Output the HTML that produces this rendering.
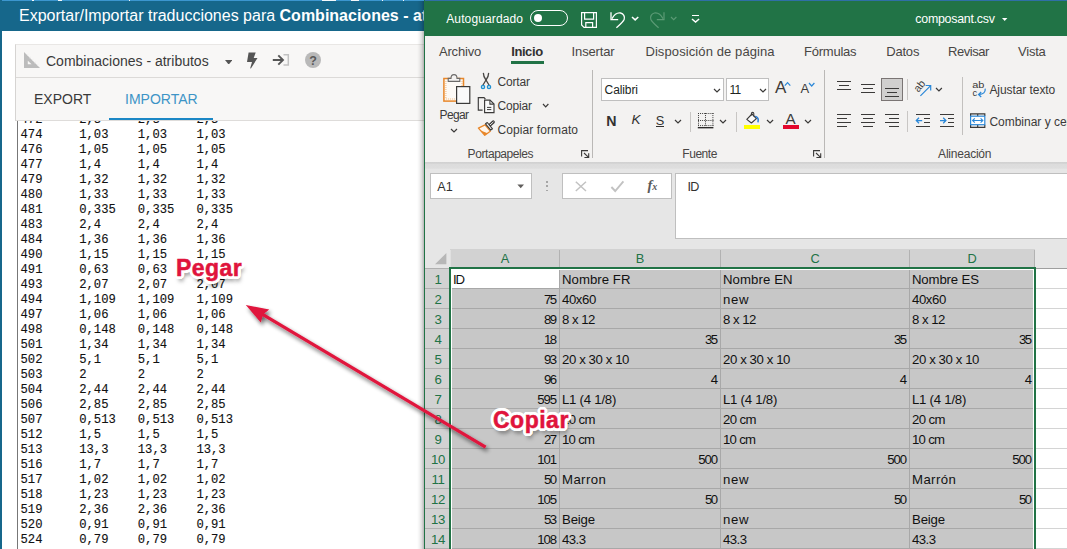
<!DOCTYPE html>
<html><head><meta charset="utf-8"><title>Import</title>
<style>
*{box-sizing:border-box;margin:0;padding:0}
html,body{width:1067px;height:549px;overflow:hidden;background:#fff}
body{position:relative;font-family:"Liberation Sans",sans-serif;color:#333}
.abs,#left *,#xl *{position:absolute}
#left{position:absolute;left:0;top:0;width:426px;height:549px;overflow:hidden;background:#fff}
#ltop{left:0;top:0;width:426px;height:1px;background:#3c96cf}
#ltitle{left:0;top:1px;width:426px;height:30px;background:#16678b}
#ltitle span{left:19px;top:5px;font-size:16px;line-height:20px;color:#fff;white-space:nowrap}
#ltitle b{position:static;font-weight:bold}
#lbord{left:0;top:0;width:2px;height:549px;background:#16678b}
#panel{left:15px;top:44px;width:420px;height:77px;background:#f8f7f6;border:1px solid #d6d4d2;border-top-color:#e9e7e5;border-bottom:none}
#psep{left:16px;top:77px;width:420px;height:1px;background:#dcdad8}
#tabline{left:16px;top:120px;width:420px;height:1px;background:#dedcda}
#tabsel{left:109px;top:118px;width:104px;height:2px;background:#1b87c5}
.lt{font-size:14px;line-height:18px;white-space:nowrap;color:#3a3a3a}
#ta{position:absolute;left:17px;top:121px;width:408px;height:428px;background:#fff;border-left:1px solid #777;overflow:hidden}
.mr{position:absolute;left:-17px;width:420px;height:15px;font-family:"Liberation Mono",monospace;font-size:12.2px;line-height:15px;color:#111;white-space:pre}
.mr span{position:absolute;top:-121px}
#lshadow{left:417px;top:1px;width:7px;height:548px;background:linear-gradient(to right,rgba(0,0,0,0),rgba(0,0,0,0.04) 30%,rgba(0,0,0,0.12) 65%,rgba(0,0,0,0.28))}

#xl{position:absolute;left:424px;top:0;width:643px;height:549px;background:#f3f2f1;overflow:hidden}
#xtop{left:0;top:0;width:643px;height:1px;background:#2f6fa6}
#xtitle{left:0;top:1px;width:643px;height:35px;background:#217346}
#xbord{left:0;top:0;width:1px;height:549px;background:#217346}
.xt{font-size:12px;line-height:16px;white-space:nowrap;color:#444}
.w{color:#fff}
#fbar{left:1px;top:162px;width:642px;height:106px;background:#e6e6e6}
#ribshadow{left:1px;top:162px;width:642px;height:7px;background:linear-gradient(to bottom,#d0d0d0 0,#d6d6d6 28%,#dcdcdc 30%,#dedede 90%,#e6e6e6 100%)}
.box{background:#fff;border:1px solid #bfbfbf}
#grid{position:absolute;left:0;top:0;width:1067px;height:549px;pointer-events:none}
#grid div{position:absolute;height:20px;font-size:13.2px;line-height:21px;white-space:nowrap;color:#111}
#grid .rh{left:425px;width:24px;background:#d2d2d2;border-bottom:1px solid #b0b0b0;color:#217346;text-align:center;font-size:13.2px;padding-left:2px;letter-spacing:-0.3px}
.c{background:#c7c7c7;border-bottom:1px solid #a8a8a8;border-right:1px solid #a8a8a8;padding-left:2px;padding-right:2px}
.n{text-align:right}
.sp{word-spacing:-0.8px}
.a1{background:#fff!important}
.e{background:#fff;border-bottom:1px solid #d4d4d4}
#sel{position:absolute;left:449px;top:267px;width:587px;height:300px;border:2px solid #217346;pointer-events:none}
#selw{position:absolute;left:451px;top:269px;width:583px;height:300px;border:1px solid #fff;border-bottom:none}
.mr{-webkit-text-stroke:0.12px #111}

.t{white-space:nowrap}
#xl svg{overflow:visible}
.lbl{position:absolute;font-weight:bold;color:#e0143c;line-height:28px;white-space:nowrap;-webkit-text-stroke:0.5px #e0143c;
text-shadow:-2px 0 0 #fff,2px 0 0 #fff,0 -2px 0 #fff,0 2px 0 #fff,-1.5px -1.5px 0 #fff,1.5px -1.5px 0 #fff,-1.5px 1.5px 0 #fff,1.5px 1.5px 0 #fff,-3.2px 0 0.6px #fff,3.2px 0 0.6px #fff,0 -3.2px 0.6px #fff,0 3.2px 0.6px #fff,-2.4px -2.4px 0.6px #fff,2.4px -2.4px 0.6px #fff,-2.4px 2.4px 0.6px #fff,2.4px 2.4px 0.6px #fff,-3px -1.3px 0.6px #fff,3px -1.3px 0.6px #fff,-3px 1.3px 0.6px #fff,3px 1.3px 0.6px #fff,-1.3px -3px 0.6px #fff,1.3px -3px 0.6px #fff,-1.3px 3px 0.6px #fff,1.3px 3px 0.6px #fff,2px 4.5px 4px rgba(0,0,0,0.55)}

</style></head>
<body>
<div id="left">
<div id="ltop"></div><div style="left:32px;top:0;width:2px;height:1px;background:#f4f8fb"></div><div style="left:58px;top:0;width:4px;height:1px;background:#f4f8fb"></div><div style="left:129px;top:0;width:1px;height:1px;background:#f4f8fb"></div><div style="left:322px;top:0;width:14px;height:1px;background:#f4f8fb"></div><div style="left:351px;top:0;width:8px;height:1px;background:#f4f8fb"></div><div style="left:382px;top:0;width:1px;height:1px;background:#f4f8fb"></div><div style="left:403px;top:0;width:1px;height:1px;background:#f4f8fb"></div>
<div id="ltitle"><span>Exportar/Importar traducciones para <b>Combinaciones - atributos</b></span></div>
<div id="panel"></div>
<div id="psep"></div>
<svg style="left:24px;top:52px" width="16" height="16" viewBox="0 0 16 16"><path d="M0 0 L0 16 L16 16 Z M3.8 8.8 L3.8 12.2 L7.6 12.2 Z" fill="#bcbcbc" fill-rule="evenodd"/><path d="M3 3.5 l1.2 -1 M5.5 6 l1.2 -1 M8 8.5 l1.2 -1 M10.5 11 l1.2 -1 M13 13.5 l1.2 -1" stroke="#e8e8e8" stroke-width="0.9"/></svg>
<div class="lt" style="left:46px;top:52px">Combinaciones - atributos</div>
<svg style="left:225px;top:59.5px" width="7.4" height="4.6" viewBox="0 0 7.4 4.6"><path d="M0 0 L7.4 0 L3.7 4.6 Z" fill="#555"/></svg>
<svg style="left:246px;top:51.5px" width="12" height="17" viewBox="0 0 12 17"><path d="M2.6 0.5 L9.7 0.5 L7.7 6 L11.5 6 L4.9 16.5 L4.2 16.2 L6 9.9 L1 9.9 Z" fill="#555"/></svg>
<svg style="left:272px;top:53px" width="18" height="14" viewBox="0 0 18 14"><path d="M11.5 1.8 L16.3 1.8 L16.3 12 L11.5 12" stroke="#c2c2c2" stroke-width="1.5" fill="none"/><path d="M0.8 7 L10.5 7 M6.3 2.3 L11 7 L6.3 11.7" stroke="#555" stroke-width="1.9" fill="none"/></svg>
<div style="left:305px;top:52px;width:16px;height:16px;border-radius:8px;background:#b9b9b9"></div>
<div style="left:305px;top:52.5px;width:16px;height:16px;line-height:16px;text-align:center;font-size:12.5px;font-weight:bold;color:#5a5a5a">?</div>
<div class="lt" style="left:34px;top:90px">EXPORT</div>
<div class="lt" style="left:125px;top:90px;color:#3d94c6">IMPORTAR</div>
<div id="tabline"></div>
<div id="tabsel"></div>
<div id="ta">
<div class="mr" style="top:113px"><span style="left:19.5px">472</span><span style="left:78.2px">2,3</span><span style="left:136.8px">2,3</span><span style="left:195.4px">2,3</span></div>
<div class="mr" style="top:128px"><span style="left:19.5px">474</span><span style="left:78.2px">1,03</span><span style="left:136.8px">1,03</span><span style="left:195.4px">1,03</span></div>
<div class="mr" style="top:143px"><span style="left:19.5px">476</span><span style="left:78.2px">1,05</span><span style="left:136.8px">1,05</span><span style="left:195.4px">1,05</span></div>
<div class="mr" style="top:158px"><span style="left:19.5px">477</span><span style="left:78.2px">1,4</span><span style="left:136.8px">1,4</span><span style="left:195.4px">1,4</span></div>
<div class="mr" style="top:173px"><span style="left:19.5px">479</span><span style="left:78.2px">1,32</span><span style="left:136.8px">1,32</span><span style="left:195.4px">1,32</span></div>
<div class="mr" style="top:188px"><span style="left:19.5px">480</span><span style="left:78.2px">1,33</span><span style="left:136.8px">1,33</span><span style="left:195.4px">1,33</span></div>
<div class="mr" style="top:203px"><span style="left:19.5px">481</span><span style="left:78.2px">0,335</span><span style="left:136.8px">0,335</span><span style="left:195.4px">0,335</span></div>
<div class="mr" style="top:218px"><span style="left:19.5px">483</span><span style="left:78.2px">2,4</span><span style="left:136.8px">2,4</span><span style="left:195.4px">2,4</span></div>
<div class="mr" style="top:233px"><span style="left:19.5px">484</span><span style="left:78.2px">1,36</span><span style="left:136.8px">1,36</span><span style="left:195.4px">1,36</span></div>
<div class="mr" style="top:248px"><span style="left:19.5px">490</span><span style="left:78.2px">1,15</span><span style="left:136.8px">1,15</span><span style="left:195.4px">1,15</span></div>
<div class="mr" style="top:263px"><span style="left:19.5px">491</span><span style="left:78.2px">0,63</span><span style="left:136.8px">0,63</span><span style="left:195.4px">0,63</span></div>
<div class="mr" style="top:278px"><span style="left:19.5px">493</span><span style="left:78.2px">2,07</span><span style="left:136.8px">2,07</span><span style="left:195.4px">2,07</span></div>
<div class="mr" style="top:293px"><span style="left:19.5px">494</span><span style="left:78.2px">1,109</span><span style="left:136.8px">1,109</span><span style="left:195.4px">1,109</span></div>
<div class="mr" style="top:308px"><span style="left:19.5px">497</span><span style="left:78.2px">1,06</span><span style="left:136.8px">1,06</span><span style="left:195.4px">1,06</span></div>
<div class="mr" style="top:323px"><span style="left:19.5px">498</span><span style="left:78.2px">0,148</span><span style="left:136.8px">0,148</span><span style="left:195.4px">0,148</span></div>
<div class="mr" style="top:338px"><span style="left:19.5px">501</span><span style="left:78.2px">1,34</span><span style="left:136.8px">1,34</span><span style="left:195.4px">1,34</span></div>
<div class="mr" style="top:353px"><span style="left:19.5px">502</span><span style="left:78.2px">5,1</span><span style="left:136.8px">5,1</span><span style="left:195.4px">5,1</span></div>
<div class="mr" style="top:368px"><span style="left:19.5px">503</span><span style="left:78.2px">2</span><span style="left:136.8px">2</span><span style="left:195.4px">2</span></div>
<div class="mr" style="top:383px"><span style="left:19.5px">504</span><span style="left:78.2px">2,44</span><span style="left:136.8px">2,44</span><span style="left:195.4px">2,44</span></div>
<div class="mr" style="top:398px"><span style="left:19.5px">506</span><span style="left:78.2px">2,85</span><span style="left:136.8px">2,85</span><span style="left:195.4px">2,85</span></div>
<div class="mr" style="top:413px"><span style="left:19.5px">507</span><span style="left:78.2px">0,513</span><span style="left:136.8px">0,513</span><span style="left:195.4px">0,513</span></div>
<div class="mr" style="top:428px"><span style="left:19.5px">512</span><span style="left:78.2px">1,5</span><span style="left:136.8px">1,5</span><span style="left:195.4px">1,5</span></div>
<div class="mr" style="top:443px"><span style="left:19.5px">513</span><span style="left:78.2px">13,3</span><span style="left:136.8px">13,3</span><span style="left:195.4px">13,3</span></div>
<div class="mr" style="top:458px"><span style="left:19.5px">516</span><span style="left:78.2px">1,7</span><span style="left:136.8px">1,7</span><span style="left:195.4px">1,7</span></div>
<div class="mr" style="top:473px"><span style="left:19.5px">517</span><span style="left:78.2px">1,02</span><span style="left:136.8px">1,02</span><span style="left:195.4px">1,02</span></div>
<div class="mr" style="top:488px"><span style="left:19.5px">518</span><span style="left:78.2px">1,23</span><span style="left:136.8px">1,23</span><span style="left:195.4px">1,23</span></div>
<div class="mr" style="top:503px"><span style="left:19.5px">519</span><span style="left:78.2px">2,36</span><span style="left:136.8px">2,36</span><span style="left:195.4px">2,36</span></div>
<div class="mr" style="top:518px"><span style="left:19.5px">520</span><span style="left:78.2px">0,91</span><span style="left:136.8px">0,91</span><span style="left:195.4px">0,91</span></div>
<div class="mr" style="top:533px"><span style="left:19.5px">524</span><span style="left:78.2px">0,79</span><span style="left:136.8px">0,79</span><span style="left:195.4px">0,79</span></div>
</div>
<div id="lshadow"></div>
<div id="lbord"></div>
</div>
<div id="xl">
<div id="xtop"></div><div id="xtitle"></div>
<div class="t" style="left:22.2px;top:10.6px;font-size:12px;line-height:16px;color:#fff;letter-spacing:0.13px;">Autoguardado</div>
<div style="left:106px;top:10px;width:38px;height:16px;border:1.2px solid #fff;border-radius:8px"></div>
<div style="left:110px;top:14px;width:8.2px;height:8.2px;border-radius:5px;background:#fff"></div>
<svg style="left:156.0px;top:11.0px" width="18" height="18" viewBox="0 0 18 18"><path d="M1.6 1.6 H16.4 V16.4 H4 L1.6 14 Z" fill="none" stroke="#fff" stroke-width="1.2"/><path d="M4.6 1.6 V8.2 H13.6 V1.6" fill="none" stroke="#fff" stroke-width="1.2"/><path d="M5.8 16.4 V11.6 H12.6 V16.4" fill="none" stroke="#fff" stroke-width="1.2"/></svg>
<svg style="left:186.0px;top:11.0px" width="16" height="18" viewBox="0 0 16 18"><path d="M1 1.2 V8.6 H8.2" fill="none" stroke="#fff" stroke-width="1.3"/><path d="M2 7.6 C4.5 3 8 1.6 10.6 2 C13.6 2.6 15 5.6 14.2 8.2 C13.4 10.6 9.5 14 6.4 16.8" fill="none" stroke="#fff" stroke-width="1.3"/></svg>
<svg style="left:206.5px;top:16.0px" width="8.3" height="4.9" viewBox="-1 -1 8.3 4.9"><path d="M0 0 L3.15 2.90 L6.30 0" stroke="#fff" stroke-width="1.5" fill="none"/></svg>
<svg style="left:225.0px;top:11.0px" width="16" height="18" viewBox="0 0 16 18"><path d="M15 1.2 V8.6 H7.8" fill="none" stroke="#5b9a75" stroke-width="1.2"/><path d="M14 7.6 C11.5 3 8 1.6 5.4 2 C2.4 2.6 1 5.6 1.8 8.2 C2.6 10.6 6.5 14 9.6 16.8" fill="none" stroke="#5b9a75" stroke-width="1.2"/></svg>
<svg style="left:245.7px;top:16.0px" width="7.4" height="4.7" viewBox="-1 -1 7.4 4.7"><path d="M0 0 L2.70 2.70 L5.40 0" stroke="#5b9a75" stroke-width="1.1" fill="none"/></svg>
<div style="left:267.7px;top:15.1px;width:7.5px;height:1.3px;background:#fff;"></div>
<svg style="left:266.9px;top:17.6px" width="9.1" height="5.0" viewBox="-1 -1 9.1 5.0"><path d="M0 0 L3.55 3.00 L7.10 0" stroke="#fff" stroke-width="1.5" fill="none"/></svg>
<div class="t" style="left:491.3px;top:10.9px;font-size:12.4px;line-height:16px;color:#fff;letter-spacing:-0.25px;">composant.csv</div>
<svg style="left:578.0px;top:18.2px" width="5.4" height="3" viewBox="0 0 5.4 3"><path d="M0 0 H5.4 L2.7 3 Z" fill="#fff"/></svg>
<div class="t" style="left:15.0px;top:44.1px;font-size:13px;line-height:16px;color:#484644;letter-spacing:-0.19px;">Archivo</div>
<div class="t" style="left:87.2px;top:44.1px;font-size:13px;line-height:16px;color:#323130;letter-spacing:-0.41px;font-weight:bold;">Inicio</div>
<div style="left:87.2px;top:61.0px;width:32.5px;height:3.0px;background:#217346;"></div>
<div class="t" style="left:147.6px;top:44.1px;font-size:13px;line-height:16px;color:#484644;letter-spacing:-0.14px;">Insertar</div>
<div class="t" style="left:221.4px;top:44.1px;font-size:13px;line-height:16px;color:#484644;letter-spacing:0.10px;">Disposición de página</div>
<div class="t" style="left:380.1px;top:44.1px;font-size:13px;line-height:16px;color:#484644;letter-spacing:-0.24px;">Fórmulas</div>
<div class="t" style="left:462.2px;top:44.1px;font-size:13px;line-height:16px;color:#484644;letter-spacing:-0.19px;">Datos</div>
<div class="t" style="left:524.1px;top:44.1px;font-size:13px;line-height:16px;color:#484644;letter-spacing:-0.46px;">Revisar</div>
<div class="t" style="left:594.1px;top:44.1px;font-size:13px;line-height:16px;color:#484644;letter-spacing:-0.24px;">Vista</div>
<svg style="left:17.0px;top:72.0px" width="32" height="34" viewBox="441 72 32 34"><rect x="443.9" y="78.5" width="19.6" height="22.6" fill="#fdfaf6" stroke="#e8872a" stroke-width="1.5"/><path d="M445.9 81 V99 H456" fill="none" stroke="#f2b06c" stroke-width="0.9" stroke-dasharray="1 1"/><path d="M462 81 V86" fill="none" stroke="#f2b06c" stroke-width="0.9" stroke-dasharray="1 1"/><path d="M448.2 81.4 V78.4 H451 C451 73.4 457 73.4 457 78.4 H459.8 V81.4 Z" fill="#f3f2f1" stroke="#6b6a69" stroke-width="1.1"/><rect x="456.6" y="86.6" width="13.2" height="16.8" fill="#fafafa" stroke="#3b3a39" stroke-width="1.2"/></svg>
<div class="t" style="left:15.6px;top:106.7px;font-size:12px;line-height:16px;color:#3b3a39;letter-spacing:-0.63px;">Pegar</div>
<svg style="left:25.9px;top:127.8px" width="8.0" height="4.9" viewBox="-1 -1 8.0 4.9"><path d="M0 0 L3.00 2.90 L6.00 0" stroke="#3b3a39" stroke-width="1.2" fill="none"/></svg>
<svg style="left:54.0px;top:70.0px" width="18" height="22" viewBox="478 70 18 22"><path d="M483.4 73.3 C483.4 76.5 484.6 78 486 80 L489 85" stroke="#484644" stroke-width="1.35" fill="none" stroke-linecap="round"/><path d="M488.6 73.3 C488.6 76.5 487.4 78 486 80 L483 85" stroke="#484644" stroke-width="1.35" fill="none" stroke-linecap="round"/><circle cx="483" cy="87" r="1.65" fill="#cfe3ea" stroke="#1e90d2" stroke-width="1.3"/><circle cx="489" cy="87" r="1.65" fill="#cfe3ea" stroke="#1e90d2" stroke-width="1.3"/></svg>
<div class="t" style="left:73.6px;top:73.5px;font-size:12px;line-height:16px;color:#3b3a39;letter-spacing:-0.19px;">Cortar</div>
<svg style="left:52.0px;top:95.0px" width="21" height="20" viewBox="476 95 21 20"><path d="M482.6 110.1 H478.3 V97.6 H484 L485.4 99" fill="none" stroke="#3b3a39" stroke-width="1.15"/><path d="M484.6 100.1 H490 L494 104 V112.6 H484.6 Z" fill="#fafafa" stroke="#3b3a39" stroke-width="1.15"/><path d="M489.9 100.3 V104.1 H493.8" fill="none" stroke="#3b3a39" stroke-width="1.05"/><path d="M487 107.4 H491.3 M487 109.6 H491.3" stroke="#3b3a39" stroke-width="1"/></svg>
<div class="t" style="left:73.6px;top:97.6px;font-size:12px;line-height:16px;color:#3b3a39;letter-spacing:-0.17px;">Copiar</div>
<svg style="left:117.6px;top:103.2px" width="7.4" height="4.8" viewBox="-1 -1 7.4 4.8"><path d="M0 0 L2.70 2.80 L5.40 0" stroke="#3b3a39" stroke-width="1.2" fill="none"/></svg>
<svg style="left:52.0px;top:119.0px" width="21" height="19" viewBox="476 119 21 19"><path d="M478.4 128.1 L485 124.9 L490.3 131.2 L484.8 135.3 Z" fill="#fff6ec" stroke="#e8872a" stroke-width="1.3" stroke-linejoin="round"/><path d="M480.6 130.4 L487.6 133.2 L484.8 135.3 Z" fill="#e8872a"/><path d="M489.6 125.4 L493.3 122" stroke="#3b3a39" stroke-width="3.1" stroke-linecap="round"/><path d="M489.8 125.2 L493.2 122.1" stroke="#f3f2f1" stroke-width="1" stroke-linecap="round"/><path d="M485.5 123.8 L487.3 122.5 L492.5 128.8 L490.7 130.1 Z" fill="#f3f2f1" stroke="#3b3a39" stroke-width="1.1" stroke-linejoin="round"/></svg>
<div class="t" style="left:73.6px;top:121.7px;font-size:12px;line-height:16px;color:#3b3a39;letter-spacing:0.08px;">Copiar formato</div>
<div class="t" style="left:43.6px;top:145.8px;font-size:12px;line-height:16px;color:#484644;letter-spacing:-0.43px;">Portapapeles</div>
<svg style="left:156.9px;top:150.0px" width="9" height="9" viewBox="0 0 9 9"><path d="M0.6 6.4 V0.6 H7" fill="none" stroke="#3b3a39" stroke-width="1.1"/><path d="M3 3 L7.6 7.4 M3.4 7.5 H7.7 V3.2" fill="none" stroke="#3b3a39" stroke-width="1.1"/></svg>
<div style="left:168.0px;top:69.5px;width:1.0px;height:88.5px;background:#bab8b6;"></div>
<div class="box" style="left:177px;top:78px;width:122.5px;height:23px"></div>
<div class="t" style="left:180.6px;top:82.0px;font-size:12px;line-height:16px;color:#201f1e;letter-spacing:-0.10px;">Calibri</div>
<svg style="left:289.4px;top:88.2px" width="8.0" height="5.0" viewBox="-1 -1 8.0 5.0"><path d="M0 0 L3.00 3.00 L6.00 0" stroke="#3b3a39" stroke-width="1.2" fill="none"/></svg>
<div class="box" style="left:301.6px;top:78px;width:43px;height:23px"></div>
<div class="t" style="left:305.6px;top:82.0px;font-size:12px;line-height:16px;color:#201f1e;letter-spacing:-0.86px;">11</div>
<svg style="left:334.5px;top:88.2px" width="8.0" height="5.0" viewBox="-1 -1 8.0 5.0"><path d="M0 0 L3.00 3.00 L6.00 0" stroke="#3b3a39" stroke-width="1.2" fill="none"/></svg>
<div class="t" style="left:351.0px;top:79.9px;font-size:17px;line-height:16px;color:#3b3a39;">A</div>
<svg style="left:359.0px;top:80.0px" width="9" height="8" viewBox="783 80 9 8"><path d="M784.8 85.6 L787.55 82.6 L790.3 85.6" fill="none" stroke="#2b88d8" stroke-width="1.2"/></svg>
<div class="t" style="left:376.6px;top:81.3px;font-size:13px;line-height:16px;color:#3b3a39;">A</div>
<svg style="left:384.0px;top:81.6px" width="7.4" height="5.0" viewBox="-1 -1 7.4 5.0"><path d="M0 0 L2.70 3.00 L5.40 0" stroke="#2b88d8" stroke-width="1.2" fill="none"/></svg>
<div class="t" style="left:182.2px;top:112.5px;font-size:14.2px;line-height:16px;color:#323130;font-weight:bold;">N</div>
<div class="t" style="left:207.4px;top:112.3px;font-size:13.6px;line-height:16px;color:#323130;font-style:italic;">K</div>
<div class="t" style="left:231.8px;top:112.6px;font-size:12.8px;line-height:16px;color:#323130;">S</div>
<div style="left:231.8px;top:126.2px;width:8.2px;height:1.1px;background:#323130;"></div>
<svg style="left:249.5px;top:118.8px" width="8.0" height="5.0" viewBox="-1 -1 8.0 5.0"><path d="M0 0 L3.00 3.00 L6.00 0" stroke="#3b3a39" stroke-width="1.2" fill="none"/></svg>
<div style="left:266.0px;top:111.5px;width:1.0px;height:20.1px;background:#c8c6c4;"></div>
<svg style="left:272.0px;top:111.0px" width="20" height="19" viewBox="696 111 20 19"><path d="M698 113.5 H713.5 M698 120.5 H713.5 M698 125.6 H713.5" stroke="#3b3a39" stroke-width="1" stroke-dasharray="1 1.07" fill="none"/><path d="M698.5 113 V126 M705.5 113 V126 M712.9 113 V126" stroke="#3b3a39" stroke-width="1" stroke-dasharray="1 1.07" fill="none"/><path d="M697.8 127.7 H713.4" stroke="#201f1e" stroke-width="1.3"/></svg>
<svg style="left:295.4px;top:118.8px" width="8.0" height="5.0" viewBox="-1 -1 8.0 5.0"><path d="M0 0 L3.00 3.00 L6.00 0" stroke="#3b3a39" stroke-width="1.2" fill="none"/></svg>
<div style="left:312.4px;top:111.5px;width:1.0px;height:20.1px;background:#c8c6c4;"></div>
<svg style="left:318.0px;top:110.0px" width="20" height="16" viewBox="742 110 20 16"><path d="M746.8 119.4 L752 114 L756.4 118.6 L751.4 123 Z" fill="#fafafa" stroke="#3b3a39" stroke-width="1.15" stroke-linejoin="round"/><path d="M751.4 115.4 V113.4 C751.4 112 753.8 112 753.8 113.4 V116.6" fill="none" stroke="#3b3a39" stroke-width="1.05"/><path d="M755.6 116.4 C757.8 117.2 758.6 119.4 758 121.8" fill="none" stroke="#2b7cd3" stroke-width="1.5" stroke-linecap="round"/></svg>
<div style="left:320.0px;top:125.0px;width:16.0px;height:4.0px;background:#ffff00;"></div>
<svg style="left:341.7px;top:118.8px" width="8.1" height="5.0" viewBox="-1 -1 8.1 5.0"><path d="M0 0 L3.05 3.00 L6.10 0" stroke="#3b3a39" stroke-width="1.2" fill="none"/></svg>
<div class="t" style="left:361.6px;top:110.9px;font-size:15.2px;line-height:16px;color:#3b3a39;">A</div>
<div style="left:358.8px;top:125.0px;width:16.2px;height:4.0px;background:#e3082d;"></div>
<svg style="left:380.4px;top:118.8px" width="8.0" height="5.0" viewBox="-1 -1 8.0 5.0"><path d="M0 0 L3.00 3.00 L6.00 0" stroke="#3b3a39" stroke-width="1.2" fill="none"/></svg>
<div class="t" style="left:258.3px;top:145.8px;font-size:12px;line-height:16px;color:#484644;letter-spacing:-0.45px;">Fuente</div>
<svg style="left:388.9px;top:150.0px" width="9" height="9" viewBox="0 0 9 9"><path d="M0.6 6.4 V0.6 H7" fill="none" stroke="#3b3a39" stroke-width="1.1"/><path d="M3 3 L7.6 7.4 M3.4 7.5 H7.7 V3.2" fill="none" stroke="#3b3a39" stroke-width="1.1"/></svg>
<div style="left:400.4px;top:69.5px;width:1.0px;height:88.5px;background:#bab8b6;"></div>
<div style="left:413.0px;top:80.9px;width:14.1px;height:1.2px;background:#3b3a39;"></div><div style="left:415.3px;top:84.9px;width:9.5px;height:1.2px;background:#3b3a39;"></div><div style="left:413.0px;top:88.9px;width:14.1px;height:1.2px;background:#3b3a39;"></div>
<div style="left:437.0px;top:83.9px;width:14.1px;height:1.2px;background:#3b3a39;"></div><div style="left:439.3px;top:87.9px;width:9.6px;height:1.2px;background:#3b3a39;"></div><div style="left:437.0px;top:91.9px;width:14.1px;height:1.2px;background:#3b3a39;"></div>
<div style="left:457.0px;top:78px;width:22px;height:23px;background:#d0cfce;border:1px solid #7a7574"></div>
<div style="left:461.0px;top:87.9px;width:14.1px;height:1.2px;background:#3b3a39;"></div><div style="left:463.2px;top:91.9px;width:9.6px;height:1.2px;background:#3b3a39;"></div><div style="left:461.0px;top:95.9px;width:14.1px;height:1.2px;background:#3b3a39;"></div>
<div style="left:483.0px;top:79.0px;width:1.0px;height:20.8px;background:#c8c6c4;"></div>
<svg style="left:488.0px;top:78.0px" width="22" height="21" viewBox="912 78 22 21"><text x="0" y="0" font-family="Liberation Sans, sans-serif" font-size="10.6" fill="#3b3a39" transform="translate(918.6 92.8) rotate(-52)">ab</text><path d="M920.4 95.8 L930.4 85.8 M925.6 85.5 H930.7 V90.6" fill="none" stroke="#2b88d8" stroke-width="1.2"/></svg>
<svg style="left:510.5px;top:87.0px" width="7.9" height="5.0" viewBox="-1 -1 7.9 5.0"><path d="M0 0 L2.95 3.00 L5.90 0" stroke="#3b3a39" stroke-width="1.2" fill="none"/></svg>
<div style="left:538.0px;top:76.5px;width:1.0px;height:58.5px;background:#c2c0be;"></div>
<svg style="left:546.0px;top:78.0px" width="20" height="22" viewBox="970 78 20 22"><text x="972.2" y="88.2" font-family="Liberation Sans, sans-serif" font-size="9.4" fill="#3b3a39" textLength="12.2" lengthAdjust="spacingAndGlyphs">ab</text><text x="972.4" y="95.6" font-family="Liberation Sans, sans-serif" font-size="9.4" fill="#3b3a39">c</text><path d="M985.2 88.6 C985.6 92.2 983.4 94.5 978.8 94.5 M981.2 92 L978.6 94.5 L981.2 97" fill="none" stroke="#2b88d8" stroke-width="1.25"/></svg>
<div class="t" style="left:565.4px;top:82.2px;font-size:12px;line-height:16px;color:#3b3a39;letter-spacing:-0.07px;">Ajustar texto</div>
<div style="left:413.0px;top:113.9px;width:14.1px;height:1.2px;background:#3b3a39;"></div><div style="left:413.0px;top:117.9px;width:9.9px;height:1.2px;background:#3b3a39;"></div><div style="left:413.0px;top:121.9px;width:14.1px;height:1.2px;background:#3b3a39;"></div><div style="left:413.0px;top:125.9px;width:9.9px;height:1.2px;background:#3b3a39;"></div>
<div style="left:437.0px;top:113.9px;width:14.1px;height:1.2px;background:#3b3a39;"></div><div style="left:439.3px;top:117.9px;width:9.6px;height:1.2px;background:#3b3a39;"></div><div style="left:437.0px;top:121.9px;width:14.1px;height:1.2px;background:#3b3a39;"></div><div style="left:439.3px;top:125.9px;width:9.6px;height:1.2px;background:#3b3a39;"></div>
<div style="left:461.0px;top:113.9px;width:14.1px;height:1.2px;background:#3b3a39;"></div><div style="left:465.3px;top:117.9px;width:9.8px;height:1.2px;background:#3b3a39;"></div><div style="left:461.0px;top:121.9px;width:14.1px;height:1.2px;background:#3b3a39;"></div><div style="left:465.3px;top:125.9px;width:9.8px;height:1.2px;background:#3b3a39;"></div>
<div style="left:483.0px;top:110.9px;width:1.0px;height:20.9px;background:#c8c6c4;"></div>
<div style="left:492.0px;top:113.9px;width:14.1px;height:1.2px;background:#3b3a39;"></div><div style="left:492.0px;top:125.9px;width:14.1px;height:1.2px;background:#3b3a39;"></div>
<div style="left:500.2px;top:117.9px;width:5.9px;height:1.2px;background:#3b3a39;"></div><div style="left:500.2px;top:121.9px;width:5.9px;height:1.2px;background:#3b3a39;"></div>
<svg style="left:490.0px;top:116.0px" width="10" height="9" viewBox="914 116 10 9"><path d="M916.3 120.5 H922.2 M919 117.8 L916.3 120.5 L919 123.2" fill="none" stroke="#2b88d8" stroke-width="1.25"/></svg>
<div style="left:516.0px;top:113.9px;width:14.1px;height:1.2px;background:#3b3a39;"></div><div style="left:516.0px;top:125.9px;width:14.1px;height:1.2px;background:#3b3a39;"></div>
<div style="left:524.2px;top:117.9px;width:5.9px;height:1.2px;background:#3b3a39;"></div><div style="left:524.2px;top:121.9px;width:5.9px;height:1.2px;background:#3b3a39;"></div>
<svg style="left:514.0px;top:116.0px" width="10" height="9" viewBox="938 116 10 9"><path d="M940 120.5 H945.9 M943.2 117.8 L945.9 120.5 L943.2 123.2" fill="none" stroke="#2b88d8" stroke-width="1.25"/></svg>
<svg style="left:544.0px;top:111.0px" width="20" height="19" viewBox="968 111 20 19"><path d="M970.6 116 V113.8 H984.8 V116 M977.7 113.8 V116 M970.6 124.8 V127.3 H984.8 V124.8 M977.7 124.8 V127.3" fill="none" stroke="#3b3a39" stroke-width="1.2"/><rect x="970.6" y="116.2" width="14.2" height="8.5" fill="#fff" stroke="#2b88d8" stroke-width="1.2"/><path d="M972.6 120.5 H982.8 M974.8 118.4 L972.6 120.5 L974.8 122.6 M980.6 118.4 L982.8 120.5 L980.6 122.6" fill="none" stroke="#2b88d8" stroke-width="1.15"/></svg>
<div class="t" style="left:565.4px;top:114.2px;font-size:12px;line-height:16px;color:#3b3a39;letter-spacing:-0.01px;">Combinar y centrar</div>
<div class="t" style="left:514.1px;top:145.8px;font-size:12px;line-height:16px;color:#484644;letter-spacing:-0.22px;">Alineación</div>
<div id="fbar"></div><div id="ribshadow"></div>
<div class="box" style="left:6px;top:173px;width:102px;height:26px"></div>
<div class="t" style="left:13.3px;top:179.1px;font-size:12.6px;line-height:16px;color:#323130;letter-spacing:0.09px;">A1</div>
<svg style="left:93.0px;top:184.0px" width="8" height="5" viewBox="0 0 8 5"><path d="M0.4 0.4 H7 L3.7 4.2 Z" fill="#605e5c"/></svg>
<div style="left:122.0px;top:181.2px;width:1.5px;height:1.5px;background:#a6a6a6;"></div>
<div style="left:122.0px;top:185.4px;width:1.5px;height:1.5px;background:#a6a6a6;"></div>
<div style="left:122.0px;top:189.6px;width:1.5px;height:1.5px;background:#a6a6a6;"></div>
<div class="box" style="left:138px;top:173px;width:110px;height:26px"></div>
<svg style="left:150.0px;top:180.0px" width="14" height="13" viewBox="574 180 14 13"><path d="M575.8 181.8 L586 191 M586 181.8 L575.8 191" stroke="#c2c2c2" stroke-width="1.5"/></svg>
<svg style="left:185.0px;top:179.0px" width="17" height="15" viewBox="609 179 17 15"><path d="M611.4 187 L615.2 191 L623.4 181.4" fill="none" stroke="#c2c2c2" stroke-width="1.9"/></svg>
<div class="t" style="left:223.39999999999998px;top:176px;font-family:'Liberation Serif',serif;font-style:italic;font-weight:bold;font-size:14.5px;line-height:18px;color:#5a5a5a">f<span style="position:static;font-size:10px;letter-spacing:0">x</span></div>
<div class="box" style="left:251px;top:173px;width:400px;height:66px"></div>
<div class="t" style="left:263.6px;top:179.1px;font-size:12.6px;line-height:16px;color:#323130;letter-spacing:-0.80px;">ID</div>
<div style="left:26.0px;top:249.0px;width:585.0px;height:18.0px;background:#d2d2d2;"></div>
<svg style="left:11.4px;top:253.3px" width="11.4" height="11.3" viewBox="0 0 11.4 11.3"><path d="M11.4 0 V11.3 H0 Z" fill="#b7b7b7"/></svg>
<div style="left:26.0px;top:250.0px;width:1.0px;height:17.0px;background:#e0e0e0;"></div>
<div style="left:135.0px;top:250.0px;width:1.0px;height:17.0px;background:#b2b2b2;"></div>
<div style="left:296.0px;top:250.0px;width:1.0px;height:17.0px;background:#b2b2b2;"></div>
<div style="left:485.0px;top:250.0px;width:1.0px;height:17.0px;background:#b2b2b2;"></div>
<div style="left:610.0px;top:250.0px;width:1.0px;height:17.0px;background:#b2b2b2;"></div>
<div class="t" style="left:76.7px;top:251.0px;font-size:12.8px;line-height:16px;color:#217346;">A</div>
<div class="t" style="left:211.7px;top:251.0px;font-size:12.8px;line-height:16px;color:#217346;">B</div>
<div class="t" style="left:386.4px;top:251.0px;font-size:12.8px;line-height:16px;color:#217346;">C</div>
<div class="t" style="left:543.4px;top:251.0px;font-size:12.8px;line-height:16px;color:#217346;">D</div>
<div style="left:612.0px;top:268.0px;width:31.0px;height:1.0px;background:#9f9f9f;"></div>
<div style="left:1.0px;top:268.0px;width:24.0px;height:1.0px;background:#b0b0b0;"></div>
<div id="xbord"></div>
</div>
<div id="grid">
<div class="rh" style="top:269px">1</div>
<div class="c a1" style="top:269px;left:451px;width:109px;letter-spacing:-1.20px">ID</div>
<div class="c" style="top:269px;left:560px;width:161px;letter-spacing:0.04px">Nombre FR</div>
<div class="c" style="top:269px;left:721px;width:189px;letter-spacing:0.08px">Nombre EN</div>
<div class="c" style="top:269px;left:910px;width:124px;letter-spacing:-0.15px;padding-right:1px">Nombre ES</div>
<div class="e" style="top:269px;left:1036px;width:31px"></div>
<div class="rh" style="top:289px">2</div>
<div class="c n" style="top:289px;left:451px;width:109px;letter-spacing:-1.68px;padding-right:3.68px">75</div>
<div class="c" style="top:289px;left:560px;width:161px;letter-spacing:-0.42px">40x60</div>
<div class="c" style="top:289px;left:721px;width:189px;letter-spacing:0.63px">new</div>
<div class="c" style="top:289px;left:910px;width:124px;letter-spacing:-0.42px;padding-right:1px">40x60</div>
<div class="e" style="top:289px;left:1036px;width:31px"></div>
<div class="rh" style="top:309px">3</div>
<div class="c n" style="top:309px;left:451px;width:109px;letter-spacing:-1.68px;padding-right:3.68px">89</div>
<div class="c" style="top:309px;left:560px;width:161px;letter-spacing:-0.53px">8 x 12</div>
<div class="c" style="top:309px;left:721px;width:189px;letter-spacing:-0.53px">8 x 12</div>
<div class="c" style="top:309px;left:910px;width:124px;letter-spacing:-0.53px;padding-right:1px">8 x 12</div>
<div class="e" style="top:309px;left:1036px;width:31px"></div>
<div class="rh" style="top:329px">4</div>
<div class="c n" style="top:329px;left:451px;width:109px;letter-spacing:-1.68px;padding-right:3.68px">18</div>
<div class="c n" style="top:329px;left:560px;width:161px;letter-spacing:-1.68px;padding-right:3.68px">35</div>
<div class="c n" style="top:329px;left:721px;width:189px;letter-spacing:-1.68px;padding-right:3.68px">35</div>
<div class="c n" style="top:329px;left:910px;width:124px;letter-spacing:-1.68px;padding-right:1px;padding-right:2.68px">35</div>
<div class="e" style="top:329px;left:1036px;width:31px"></div>
<div class="rh" style="top:349px">5</div>
<div class="c n" style="top:349px;left:451px;width:109px;letter-spacing:-1.68px;padding-right:3.68px">93</div>
<div class="c" style="top:349px;left:560px;width:161px;letter-spacing:-0.40px">20 x 30 x 10</div>
<div class="c" style="top:349px;left:721px;width:189px;letter-spacing:-0.40px">20 x 30 x 10</div>
<div class="c" style="top:349px;left:910px;width:124px;letter-spacing:-0.40px;padding-right:1px">20 x 30 x 10</div>
<div class="e" style="top:349px;left:1036px;width:31px"></div>
<div class="rh" style="top:369px">6</div>
<div class="c n" style="top:369px;left:451px;width:109px;letter-spacing:-1.68px;padding-right:3.68px">96</div>
<div class="c n" style="top:369px;left:560px;width:161px">4</div>
<div class="c n" style="top:369px;left:721px;width:189px">4</div>
<div class="c n" style="top:369px;left:910px;width:124px;padding-right:1px">4</div>
<div class="e" style="top:369px;left:1036px;width:31px"></div>
<div class="rh" style="top:389px">7</div>
<div class="c n" style="top:389px;left:451px;width:109px;letter-spacing:-1.11px;padding-right:3.11px">595</div>
<div class="c" style="top:389px;left:560px;width:161px;letter-spacing:-0.24px">L1 (4 1/8)</div>
<div class="c" style="top:389px;left:721px;width:189px;letter-spacing:-0.24px">L1 (4 1/8)</div>
<div class="c" style="top:389px;left:910px;width:124px;letter-spacing:-0.24px;padding-right:1px">L1 (4 1/8)</div>
<div class="e" style="top:389px;left:1036px;width:31px"></div>
<div class="rh" style="top:409px">8</div>
<div class="c n" style="top:409px;left:451px;width:109px;letter-spacing:-1.68px;padding-right:3.68px">47</div>
<div class="c" style="top:409px;left:560px;width:161px;letter-spacing:-0.59px">20 cm</div>
<div class="c" style="top:409px;left:721px;width:189px;letter-spacing:-0.59px">20 cm</div>
<div class="c" style="top:409px;left:910px;width:124px;letter-spacing:-0.59px;padding-right:1px">20 cm</div>
<div class="e" style="top:409px;left:1036px;width:31px"></div>
<div class="rh" style="top:429px">9</div>
<div class="c n" style="top:429px;left:451px;width:109px;letter-spacing:-1.68px;padding-right:3.68px">27</div>
<div class="c" style="top:429px;left:560px;width:161px;letter-spacing:-0.71px">10 cm</div>
<div class="c" style="top:429px;left:721px;width:189px;letter-spacing:-0.71px">10 cm</div>
<div class="c" style="top:429px;left:910px;width:124px;letter-spacing:-0.71px;padding-right:1px">10 cm</div>
<div class="e" style="top:429px;left:1036px;width:31px"></div>
<div class="rh" style="top:449px">10</div>
<div class="c n" style="top:449px;left:451px;width:109px;letter-spacing:-1.11px;padding-right:3.11px">101</div>
<div class="c n" style="top:449px;left:560px;width:161px;letter-spacing:-1.11px;padding-right:3.11px">500</div>
<div class="c n" style="top:449px;left:721px;width:189px;letter-spacing:-1.11px;padding-right:3.11px">500</div>
<div class="c n" style="top:449px;left:910px;width:124px;letter-spacing:-1.11px;padding-right:1px;padding-right:2.11px">500</div>
<div class="e" style="top:449px;left:1036px;width:31px"></div>
<div class="rh" style="top:469px">11</div>
<div class="c n" style="top:469px;left:451px;width:109px;letter-spacing:-1.68px;padding-right:3.68px">50</div>
<div class="c" style="top:469px;left:560px;width:161px;letter-spacing:0.40px">Marron</div>
<div class="c" style="top:469px;left:721px;width:189px;letter-spacing:0.63px">new</div>
<div class="c" style="top:469px;left:910px;width:124px;letter-spacing:0.40px;padding-right:1px">Marrón</div>
<div class="e" style="top:469px;left:1036px;width:31px"></div>
<div class="rh" style="top:489px">12</div>
<div class="c n" style="top:489px;left:451px;width:109px;letter-spacing:-1.11px;padding-right:3.11px">105</div>
<div class="c n" style="top:489px;left:560px;width:161px;letter-spacing:-1.68px;padding-right:3.68px">50</div>
<div class="c n" style="top:489px;left:721px;width:189px;letter-spacing:-1.68px;padding-right:3.68px">50</div>
<div class="c n" style="top:489px;left:910px;width:124px;letter-spacing:-1.68px;padding-right:1px;padding-right:2.68px">50</div>
<div class="e" style="top:489px;left:1036px;width:31px"></div>
<div class="rh" style="top:509px">13</div>
<div class="c n" style="top:509px;left:451px;width:109px;letter-spacing:-1.68px;padding-right:3.68px">53</div>
<div class="c" style="top:509px;left:560px;width:161px;letter-spacing:-0.17px">Beige</div>
<div class="c" style="top:509px;left:721px;width:189px;letter-spacing:0.63px">new</div>
<div class="c" style="top:509px;left:910px;width:124px;letter-spacing:-0.17px;padding-right:1px">Beige</div>
<div class="e" style="top:509px;left:1036px;width:31px"></div>
<div class="rh" style="top:529px">14</div>
<div class="c n" style="top:529px;left:451px;width:109px;letter-spacing:-1.11px;padding-right:3.11px">108</div>
<div class="c" style="top:529px;left:560px;width:161px;letter-spacing:-0.56px">43.3</div>
<div class="c" style="top:529px;left:721px;width:189px;letter-spacing:-0.56px">43.3</div>
<div class="c" style="top:529px;left:910px;width:124px;letter-spacing:-0.56px;padding-right:1px">43.3</div>
<div class="e" style="top:529px;left:1036px;width:31px"></div>
</div>
<div id="selw"></div><div id="sel"></div>
<svg style="left:0;top:0;position:absolute;overflow:visible" width="1067" height="549" viewBox="0 0 1067 549">
<defs><filter id="ds" x="-10%" y="-10%" width="120%" height="130%"><feGaussianBlur in="SourceAlpha" stdDeviation="1.9"/><feOffset dx="1.5" dy="3"/><feComponentTransfer><feFuncA type="linear" slope="0.6"/></feComponentTransfer><feMerge><feMergeNode/><feMergeNode in="SourceGraphic"/></feMerge></filter></defs>
<g filter="url(#ds)">
<path d="M485.6 447.2 L262.6 314.4" stroke="#e0143c" stroke-width="3.2" fill="none"/>
<path d="M245.8 304.9 L269.2 309.5 L263 314.4 L260.8 322.6 Z" fill="#e0143c"/>
</g>
</svg>
<div class="lbl" style="left:176px;top:253.5px;font-size:23px;letter-spacing:0.45px">Pegar</div>
<div class="lbl" style="left:493px;top:406px;font-size:23px;letter-spacing:0.5px">Copiar</div>
</body></html>
